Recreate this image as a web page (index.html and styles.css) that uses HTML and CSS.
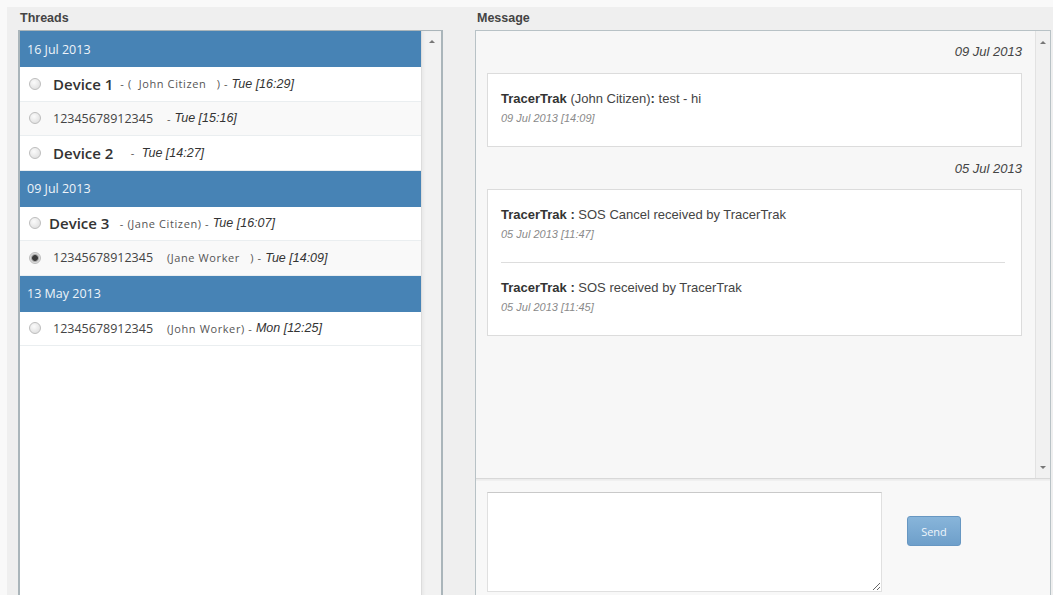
FILE: index.html
```html
<!DOCTYPE html>
<html lang="en">
<head>
<meta charset="utf-8">
<title>Messages</title>
<link rel="stylesheet" href="styles.css">
</head>
<body>
<div class="app">
  <section class="col-threads">
    <div class="label">Threads</div>
    <div class="threads-panel">
      <div class="thread-list">
        <div class="day">16 Jul 2013</div>
        <div class="row">
          <span class="radio"></span>
          <span class="name">Device 1</span><span class="meta">  - (  John Citizen   ) - </span><span class="when">Tue [16:29]</span>
        </div>
        <div class="row alt">
          <span class="radio"></span>
          <span class="num">12345678912345</span><span class="meta">    - </span><span class="when">Tue [15:16]</span>
        </div>
        <div class="row">
          <span class="radio"></span>
          <span class="name">Device 2</span><span class="meta">     -  </span><span class="when">Tue [14:27]</span>
        </div>
        <div class="day">09 Jul 2013</div>
        <div class="row">
          <span class="radio"></span>
          <span class="name tight">Device 3</span><span class="meta">   - (Jane Citizen) - </span><span class="when">Tue [16:07]</span>
        </div>
        <div class="row alt">
          <span class="radio on"></span>
          <span class="num">12345678912345</span><span class="meta">    (Jane Worker   ) - </span><span class="when">Tue [14:09]</span>
        </div>
        <div class="day">13 May 2013</div>
        <div class="row">
          <span class="radio"></span>
          <span class="num">12345678912345</span><span class="meta">    (John Worker) - </span><span class="when">Mon [12:25]</span>
        </div>
      </div>
      <div class="vscroll">
        <span class="arrow-up"></span>
      </div>
    </div>
  </section>

  <section class="col-message">
    <div class="label">Message</div>
    <div class="message-panel">
      <div class="feed-wrap">
        <div class="feed">
          <div class="stamp first">09 Jul 2013</div>
          <div class="card">
            <div class="msg">
              <div class="msg-text"><b>TracerTrak</b> (John Citizen)<b>:</b> test - hi</div>
              <div class="msg-time">09 Jul 2013 [14:09]</div>
            </div>
          </div>
          <div class="stamp">05 Jul 2013</div>
          <div class="card">
            <div class="msg">
              <div class="msg-text"><b>TracerTrak :</b> SOS Cancel received by TracerTrak</div>
              <div class="msg-time">05 Jul 2013 [11:47]</div>
            </div>
            <div class="msg">
              <div class="msg-text"><b>TracerTrak :</b> SOS received by TracerTrak</div>
              <div class="msg-time">05 Jul 2013 [11:45]</div>
            </div>
          </div>
        </div>
        <div class="feed-scroll">
          <span class="arrow-up"></span>
          <span class="arrow-down"></span>
        </div>
      </div>
      <div class="composer">
        <textarea class="reply"></textarea>
        <button class="send" type="button">Send</button>
      </div>
    </div>
  </section>
</div>
</body>
</html>
```

FILE: styles.css
```css
html, body {
  margin: 0;
  height: 100%;
}

body {
  background: #f9f9f9;
  font-family: "Liberation Sans", Arial, sans-serif;
  overflow: hidden;
}

.app {
  margin: 7px 0 0 7px;
  padding-left: 11px;
  background: #efefef;
  display: flex;
  gap: 32px;
  height: 620px;
}

.label {
  height: 23px;
  line-height: 22px;
  padding-left: 2px;
  font-size: 12.5px;
  font-weight: bold;
  color: #444;
}

/* ---- threads column ---- */
.col-threads {
  width: 425px;
}

.threads-panel {
  display: flex;
  height: 580px;
  background: #fff;
  border: 2px solid #aab5ba;
  border-top-width: 1px;
  border-bottom: none;
}

.thread-list {
  width: 401px;
}

.day {
  height: 36px;
  display: flex;
  align-items: center;
  padding-left: 7px;
  background: #4783b5;
  color: #eef4f9;
  font-family: "Open Sans", sans-serif;
  font-size: 12.5px;
}

.row {
  box-sizing: border-box;
  height: 34.5px;
  display: flex;
  align-items: center;
  padding-left: 9px;
  border-bottom: 1px solid #eaeef0;
  white-space: pre;
  color: #444;
}

.row.alt {
  background: #f9f9f9;
}

.radio {
  flex: none;
  width: 10px;
  height: 10px;
  margin-right: 12px;
  border-radius: 50%;
  border: 1px solid #bdbdbd;
  background: radial-gradient(circle at 40% 35%, #fbfbfb, #d9d9d9);
}

.radio.on {
  background: radial-gradient(circle, #3a3a3a 0 2.5px, #9a9a9a 3.2px, #dcdcdc 4.5px);
}

.name {
  font-family: "Open Sans", sans-serif;
  font-size: 15px;
  font-weight: 600;
  color: #333;
}

.name.tight {
  margin-left: -4px;
}

.num {
  font-family: "Open Sans", sans-serif;
  font-size: 12.5px;
  color: #444;
}

.meta {
  font-family: "Open Sans", sans-serif;
  font-size: 11px;
  letter-spacing: 0.6px;
  color: #555;
}

.when {
  font-size: 12.5px;
  font-style: italic;
  color: #333;
}

.vscroll {
  flex: 1;
  display: flex;
  flex-direction: column;
  align-items: center;
  padding-top: 9px;
  background: #f2f2f2;
  border-left: 1px solid #dcdcdc;
  box-shadow: inset 2px 0 2px #e9e9e9;
}

.arrow-up,
.arrow-down {
  width: 0;
  height: 0;
  border-left: 3px solid transparent;
  border-right: 3px solid transparent;
}

.arrow-up {
  border-bottom: 3px solid #777;
}

.arrow-down {
  border-top: 3px solid #777;
}

/* ---- message column ---- */
.col-message {
  width: 576px;
}

.message-panel {
  height: 580px;
  display: flex;
  flex-direction: column;
  background: #f7f7f7;
  border: 1px solid #b8c2c6;
  border-bottom: none;
}

.feed-wrap {
  height: 447px;
  display: flex;
}

.feed {
  flex: 1;
  padding: 13px 13px 0 11px;
}

.stamp {
  margin: 14px 0 12px;
  line-height: 16px;
  text-align: right;
  font-size: 13px;
  font-style: italic;
  color: #444;
}

.stamp.first {
  margin-top: 0;
  margin-bottom: 13px;
}

.card {
  background: #fff;
  border: 1px solid #dcdcdc;
  padding: 0 16px 0 13px;
}

.msg {
  padding: 17px 0 21px;
}

.msg + .msg {
  border-top: 1px solid #dddddd;
}

.msg-text {
  font-size: 13px;
  line-height: 16px;
  color: #444;
}

.msg-text b {
  color: #333;
}

.msg-time {
  margin-top: 5px;
  line-height: 13px;
  font-size: 11px;
  font-style: italic;
  color: #8a8a8a;
}

.feed-scroll {
  width: 15px;
  display: flex;
  flex-direction: column;
  justify-content: space-between;
  align-items: center;
  padding: 10px 0 9px;
  box-sizing: border-box;
  background: #f1f1f1;
  border-left: 1px solid #e2e2e2;
}

.composer {
  flex: 1;
  display: flex;
  align-items: flex-start;
  padding: 13px 0 0 11px;
  border-top: 1px solid #d8d8d8;
  box-shadow: inset 0 1px 0 #ececec, inset 0 2px 0 #f0f0f0;
  background: #f8f8f8;
}

.reply {
  box-sizing: border-box;
  width: 395px;
  height: 100px;
  margin: 0;
  background: #fff;
  border: 1px solid #e0e0e0;
  border-top-color: #c9c9c9;
  resize: vertical;
  font-family: "Liberation Sans", Arial, sans-serif;
}

.send {
  margin: 24px 0 0 25px;
  width: 54px;
  height: 30px;
  border: 1px solid #6797c2;
  border-radius: 3px;
  background: linear-gradient(#88b5da, #6e9fca);
  color: #eef5fb;
  font-family: "Open Sans", sans-serif;
  font-size: 11px;
  padding: 0;
}
```
